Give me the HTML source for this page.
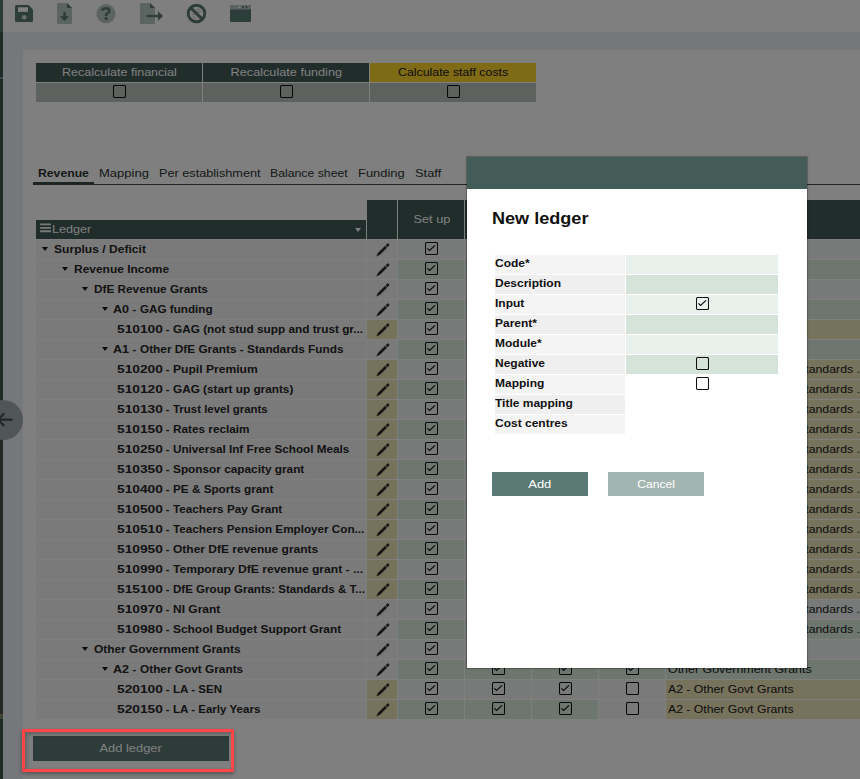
<!DOCTYPE html>
<html><head><meta charset="utf-8">
<style>
*{margin:0;padding:0;box-sizing:border-box}
html,body{width:860px;height:779px;overflow:hidden;background:#fff;font-family:"Liberation Sans",sans-serif;position:relative}
.a{position:absolute}
svg.a{display:block}
#strip{left:0;top:0;width:3px;height:779px;background:#3e524d}
#band{left:3px;top:32px;width:857px;height:747px;background:#eaeef5}
#panel{left:23px;top:50px;width:837px;height:729px;background:#fff}
.rc{top:63px;height:19px;background:#425a56;color:#fff;font-size:11px;line-height:18px;text-align:center}
.rb{top:83px;height:19px;background:#bac4bd}
.ck{display:block}
.tab{top:165px;font-size:11px;line-height:16px;color:#2b3331;white-space:nowrap}
.hd{background:#425a56}
.hdt{font-size:11px;line-height:19px;color:#fff;white-space:nowrap}
.lt{font-size:11px;font-weight:bold;line-height:19px;color:#262626;white-space:nowrap;}
.pt{font-size:11px;line-height:19px;color:#1a1a1a;white-space:nowrap;}
.tri{width:0;height:0;border-left:3.5px solid transparent;border-right:3.5px solid transparent;border-top:4.5px solid #111}
#circ{left:-17px;top:400px;width:40px;height:40px;border-radius:50%;background:#a0abac}
.btn{height:24px;line-height:24px;color:#fff;font-size:11px;text-align:center}
#overlay{left:0;top:0;width:860px;height:779px;background:rgba(0,0,0,0.5)}
.mtitle{font-size:16px;font-weight:bold;line-height:20px;color:#111;}
.ml{height:19px;font-size:11px;font-weight:bold;line-height:16px;color:#111;white-space:nowrap;}

</style></head><body>
<div class="a" id="strip"></div><div class="a" style="left:0;top:0;width:3px;height:32px;background:#5b766f"></div><div class="a" style="left:0;top:77px;width:3px;height:2px;background:#72908a"></div><div class="a" style="left:0;top:440px;width:3px;height:274px;background:#4a5149"></div><div class="a" style="left:0;top:714px;width:3px;height:3px;background:#8c8468"></div><div class="a" style="left:0;top:717px;width:3px;height:2px;background:#6e8c70"></div>
<div class="a" id="band"></div>
<div class="a" id="panel"></div>
<svg class="a" style="left:15px;top:5px" width="18" height="17" viewBox="0 0 18 17"><path d="M1.5 0 H13.5 L18 4.5 V15.5 Q18 17 16.5 17 H1.5 Q0 17 0 15.5 V1.5 Q0 0 1.5 0 Z" fill="#5b7a74"/><rect x="3" y="2.3" width="10" height="4.6" fill="#fff"/><circle cx="9.2" cy="12.3" r="2.4" fill="#fff" opacity="0.7"/></svg>
<svg class="a" style="left:57px;top:3px" width="15" height="21" viewBox="0 0 15 21"><path d="M1 0 H10 L15 5 V20 Q15 21 14 21 H1 Q0 21 0 20 V1 Q0 0 1 0 Z" fill="#b9c9c5"/><path d="M10 0 L15 5 H10 Z" fill="#5b7a74"/><rect x="6.3" y="9" width="2.4" height="5" fill="#5b7a74"/><path d="M2.8 13.3 H12.2 L7.5 18 Z" fill="#5b7a74"/></svg>
<svg class="a" style="left:96px;top:4px" width="20" height="20" viewBox="0 0 20 20"><circle cx="10" cy="9.7" r="9.6" fill="#b9c9c5"/><path d="M6.3 6.6 Q6.5 4.2 10 4.2 Q13.4 4.2 13.4 6.6 Q13.4 8.3 11.6 9.2 Q10 10 10 11.9" fill="none" stroke="#5b7a74" stroke-width="2.6"/><rect x="8.7" y="13.1" width="2.7" height="2.8" rx="0.4" fill="#5b7a74"/></svg>
<svg class="a" style="left:140px;top:3px" width="24" height="21" viewBox="0 0 24 21"><path d="M1 0 H10 L15 5 V20 Q15 21 14 21 H1 Q0 21 0 20 V1 Q0 0 1 0 Z" fill="#b9c9c5"/><path d="M10 0 L15 5 H10 Z" fill="#5b7a74"/><rect x="7" y="11.8" width="12" height="2.4" fill="#5b7a74"/><path d="M18 8.2 L23 13 L18 17.8 Z" fill="#5b7a74"/></svg>
<svg class="a" style="left:186px;top:3px" width="21" height="21" viewBox="0 0 21 21"><path d="M10.5 7 L14.5 6 M11 9.2 L15 8.4 M6.2 11.8 L9.8 11.2 M6.8 13.6 L10 15.2" stroke="#5b7a74" stroke-width="1" opacity="0.4"/><circle cx="10.5" cy="10.5" r="8.3" fill="none" stroke="#5b7a74" stroke-width="2.9"/><path d="M4.6 4.6 L16.4 16.4" stroke="#5b7a74" stroke-width="2.9"/></svg>
<svg class="a" style="left:230px;top:5px" width="21" height="17" viewBox="0 0 21 17"><rect x="0" y="0" width="21" height="17" rx="1.2" fill="#5b7a74"/><rect x="0" y="0" width="21" height="4.5" rx="1" fill="#b9c9c5"/><circle cx="9.5" cy="2.3" r="1.1" fill="#fff"/><circle cx="13" cy="2.3" r="1.1" fill="#5b7a74"/><circle cx="16.5" cy="2.3" r="1.1" fill="#5b7a74"/></svg>
<div class="a rc" style="left:36px;width:166px;"><span style="display:inline-block;transform:scaleX(1.138);transform-origin:center">Recalculate financial</span></div>
<div class="a rc" style="left:203px;width:166px;"><span style="display:inline-block;transform:scaleX(1.154);transform-origin:center">Recalculate funding</span></div>
<div class="a rc" style="left:370px;width:166px;background:#ffd42a;color:#1b1b1b"><span style="display:inline-block;transform:scaleX(1.12);transform-origin:center">Calculate staff costs</span></div>
<div class="a rb" style="left:36px;width:166px"></div>
<div class="a rb" style="left:203px;width:166px"></div>
<div class="a rb" style="left:370px;width:166px"></div>
<div class="a" style="left:113px;top:85px;width:13px;height:13px"><svg class="ck" width="13" height="13" viewBox="0 0 13 13"><rect x="0.5" y="0.5" width="12" height="12" rx="1.2" fill="none" stroke="#111" stroke-width="1.05"/></svg></div><div class="a" style="left:280px;top:85px;width:13px;height:13px"><svg class="ck" width="13" height="13" viewBox="0 0 13 13"><rect x="0.5" y="0.5" width="12" height="12" rx="1.2" fill="none" stroke="#111" stroke-width="1.05"/></svg></div><div class="a" style="left:447px;top:85px;width:13px;height:13px"><svg class="ck" width="13" height="13" viewBox="0 0 13 13"><rect x="0.5" y="0.5" width="12" height="12" rx="1.2" fill="none" stroke="#111" stroke-width="1.05"/></svg></div>
<div class="a tab" style="left:38px;font-weight:bold;"><span style="display:inline-block;transform:scaleX(1.11);transform-origin:left">Revenue</span></div>
<div class="a tab" style="left:99px;"><span style="display:inline-block;transform:scaleX(1.185);transform-origin:left">Mapping</span></div>
<div class="a tab" style="left:159px;"><span style="display:inline-block;transform:scaleX(1.153);transform-origin:left">Per establishment</span></div>
<div class="a tab" style="left:270px;"><span style="display:inline-block;transform:scaleX(1.115);transform-origin:left">Balance sheet</span></div>
<div class="a tab" style="left:358px;"><span style="display:inline-block;transform:scaleX(1.176);transform-origin:left">Funding</span></div>
<div class="a tab" style="left:415px;"><span style="display:inline-block;transform:scaleX(1.17);transform-origin:left">Staff</span></div>
<div class="a" style="left:33px;top:184px;width:827px;height:1px;background:#3a4a46"></div>
<div class="a" style="left:33px;top:182px;width:61px;height:3px;background:#3a4a46"></div>
<div class="a hd" style="left:36px;top:220px;width:330px;height:19px"></div>
<svg class="a" style="left:40px;top:220px" width="11" height="16" viewBox="0 0 11 16"><g fill="#f0f3f2"><rect x="0" y="3.4" width="11" height="1.9" rx="0.5"/><rect x="0" y="6.9" width="11" height="1.9" rx="0.5"/><rect x="0" y="10.3" width="11" height="1.9" rx="0.5"/></g></svg>
<div class="a hdt" style="left:52px;top:220px"><span style="display:inline-block;transform:scaleX(1.146);transform-origin:left">Ledger</span></div>
<div class="a" style="left:355px;top:228px;width:0;height:0;border-left:3.6px solid transparent;border-right:3.6px solid transparent;border-top:4px solid #fff"></div>
<div class="a hd" style="left:367px;top:200px;width:30px;height:39px"></div>
<div class="a hd" style="left:398px;top:200px;width:66px;height:39px"></div>
<div class="a hd" style="left:465px;top:200px;width:66px;height:39px"></div>
<div class="a hd" style="left:532px;top:200px;width:66px;height:39px"></div>
<div class="a hd" style="left:599px;top:200px;width:66px;height:39px"></div>
<div class="a hd" style="left:666px;top:200px;width:194px;height:39px"></div>
<div class="a hdt" style="left:398px;top:210px;width:66px;text-align:center;padding-left:1px"><span style="display:inline-block;transform:scaleX(1.157);transform-origin:center">Set up</span></div>
<div class="a" style="left:36px;top:240px;width:330px;height:19px;background:#f4f4f4"></div>
<div class="a tri" style="left:41.5px;top:247px"></div>
<div class="a lt" style="left:54px;top:240px"><span style="display:inline-block;transform:scaleX(1.098);transform-origin:left">Surplus / Deficit</span></div>
<div class="a" style="left:367px;top:240px;width:30px;height:19px;background:#f4f4f4"></div>
<div class="a" style="left:375px;top:242px;width:16px;height:16px"><svg width="16" height="16" viewBox="0 0 16 16"><g transform="translate(1.2 14.6) rotate(-45)" fill="#2e2e2e"><path d="M0 0 L4 -1.35 H14 V1.35 H4 Z"/><path d="M14.7 -1.35 H16.9 Q17.9 -1.35 17.9 -0.35 V0.35 Q17.9 1.35 16.9 1.35 H14.7 Z"/></g></svg></div>
<div class="a" style="left:398px;top:240px;width:66px;height:19px;background:#f1f5f3"></div>
<div class="a" style="left:465px;top:240px;width:66px;height:19px;background:#f1f5f3"></div>
<div class="a" style="left:532px;top:240px;width:66px;height:19px;background:#f1f5f3"></div>
<div class="a" style="left:599px;top:240px;width:66px;height:19px;background:#f1f5f3"></div>
<div class="a" style="left:666px;top:240px;width:194px;height:19px;background:#f1f5f3"></div>
<div class="a" style="left:425px;top:242px;width:13px;height:13px"><svg class="ck" width="13" height="13" viewBox="0 0 13 13"><rect x="0.5" y="0.5" width="12" height="12" rx="1.2" fill="none" stroke="#111" stroke-width="1.05"/><path d="M2.4 6.4 L4.6 8.5 L10 3.4" fill="none" stroke="#111" stroke-width="1.2"/></svg></div>
<div class="a" style="left:492px;top:242px;width:13px;height:13px"><svg class="ck" width="13" height="13" viewBox="0 0 13 13"><rect x="0.5" y="0.5" width="12" height="12" rx="1.2" fill="none" stroke="#111" stroke-width="1.05"/><path d="M2.4 6.4 L4.6 8.5 L10 3.4" fill="none" stroke="#111" stroke-width="1.2"/></svg></div>
<div class="a" style="left:559px;top:242px;width:13px;height:13px"><svg class="ck" width="13" height="13" viewBox="0 0 13 13"><rect x="0.5" y="0.5" width="12" height="12" rx="1.2" fill="none" stroke="#111" stroke-width="1.05"/><path d="M2.4 6.4 L4.6 8.5 L10 3.4" fill="none" stroke="#111" stroke-width="1.2"/></svg></div>
<div class="a" style="left:626px;top:242px;width:13px;height:13px"><svg class="ck" width="13" height="13" viewBox="0 0 13 13"><rect x="0.5" y="0.5" width="12" height="12" rx="1.2" fill="none" stroke="#111" stroke-width="1.05"/><path d="M2.4 6.4 L4.6 8.5 L10 3.4" fill="none" stroke="#111" stroke-width="1.2"/></svg></div>
<div class="a" style="left:36px;top:260px;width:330px;height:19px;background:#f4f4f4"></div>
<div class="a tri" style="left:61.5px;top:267px"></div>
<div class="a lt" style="left:74px;top:260px"><span style="display:inline-block;transform:scaleX(1.087);transform-origin:left">Revenue Income</span></div>
<div class="a" style="left:367px;top:260px;width:30px;height:19px;background:#f4f4f4"></div>
<div class="a" style="left:375px;top:262px;width:16px;height:16px"><svg width="16" height="16" viewBox="0 0 16 16"><g transform="translate(1.2 14.6) rotate(-45)" fill="#2e2e2e"><path d="M0 0 L4 -1.35 H14 V1.35 H4 Z"/><path d="M14.7 -1.35 H16.9 Q17.9 -1.35 17.9 -0.35 V0.35 Q17.9 1.35 16.9 1.35 H14.7 Z"/></g></svg></div>
<div class="a" style="left:398px;top:260px;width:66px;height:19px;background:#dbeedf"></div>
<div class="a" style="left:465px;top:260px;width:66px;height:19px;background:#dbeedf"></div>
<div class="a" style="left:532px;top:260px;width:66px;height:19px;background:#dbeedf"></div>
<div class="a" style="left:599px;top:260px;width:66px;height:19px;background:#dbeedf"></div>
<div class="a" style="left:666px;top:260px;width:194px;height:19px;background:#dbeedf"></div>
<div class="a" style="left:425px;top:262px;width:13px;height:13px"><svg class="ck" width="13" height="13" viewBox="0 0 13 13"><rect x="0.5" y="0.5" width="12" height="12" rx="1.2" fill="none" stroke="#111" stroke-width="1.05"/><path d="M2.4 6.4 L4.6 8.5 L10 3.4" fill="none" stroke="#111" stroke-width="1.2"/></svg></div>
<div class="a" style="left:492px;top:262px;width:13px;height:13px"><svg class="ck" width="13" height="13" viewBox="0 0 13 13"><rect x="0.5" y="0.5" width="12" height="12" rx="1.2" fill="none" stroke="#111" stroke-width="1.05"/><path d="M2.4 6.4 L4.6 8.5 L10 3.4" fill="none" stroke="#111" stroke-width="1.2"/></svg></div>
<div class="a" style="left:559px;top:262px;width:13px;height:13px"><svg class="ck" width="13" height="13" viewBox="0 0 13 13"><rect x="0.5" y="0.5" width="12" height="12" rx="1.2" fill="none" stroke="#111" stroke-width="1.05"/><path d="M2.4 6.4 L4.6 8.5 L10 3.4" fill="none" stroke="#111" stroke-width="1.2"/></svg></div>
<div class="a" style="left:626px;top:262px;width:13px;height:13px"><svg class="ck" width="13" height="13" viewBox="0 0 13 13"><rect x="0.5" y="0.5" width="12" height="12" rx="1.2" fill="none" stroke="#111" stroke-width="1.05"/><path d="M2.4 6.4 L4.6 8.5 L10 3.4" fill="none" stroke="#111" stroke-width="1.2"/></svg></div>
<div class="a" style="left:36px;top:280px;width:330px;height:19px;background:#f4f4f4"></div>
<div class="a tri" style="left:81.5px;top:287px"></div>
<div class="a lt" style="left:94px;top:280px"><span style="display:inline-block;transform:scaleX(1.071);transform-origin:left">DfE Revenue Grants</span></div>
<div class="a" style="left:367px;top:280px;width:30px;height:19px;background:#f4f4f4"></div>
<div class="a" style="left:375px;top:282px;width:16px;height:16px"><svg width="16" height="16" viewBox="0 0 16 16"><g transform="translate(1.2 14.6) rotate(-45)" fill="#2e2e2e"><path d="M0 0 L4 -1.35 H14 V1.35 H4 Z"/><path d="M14.7 -1.35 H16.9 Q17.9 -1.35 17.9 -0.35 V0.35 Q17.9 1.35 16.9 1.35 H14.7 Z"/></g></svg></div>
<div class="a" style="left:398px;top:280px;width:66px;height:19px;background:#f1f5f3"></div>
<div class="a" style="left:465px;top:280px;width:66px;height:19px;background:#f1f5f3"></div>
<div class="a" style="left:532px;top:280px;width:66px;height:19px;background:#f1f5f3"></div>
<div class="a" style="left:599px;top:280px;width:66px;height:19px;background:#f1f5f3"></div>
<div class="a" style="left:666px;top:280px;width:194px;height:19px;background:#f1f5f3"></div>
<div class="a" style="left:425px;top:282px;width:13px;height:13px"><svg class="ck" width="13" height="13" viewBox="0 0 13 13"><rect x="0.5" y="0.5" width="12" height="12" rx="1.2" fill="none" stroke="#111" stroke-width="1.05"/><path d="M2.4 6.4 L4.6 8.5 L10 3.4" fill="none" stroke="#111" stroke-width="1.2"/></svg></div>
<div class="a" style="left:492px;top:282px;width:13px;height:13px"><svg class="ck" width="13" height="13" viewBox="0 0 13 13"><rect x="0.5" y="0.5" width="12" height="12" rx="1.2" fill="none" stroke="#111" stroke-width="1.05"/><path d="M2.4 6.4 L4.6 8.5 L10 3.4" fill="none" stroke="#111" stroke-width="1.2"/></svg></div>
<div class="a" style="left:559px;top:282px;width:13px;height:13px"><svg class="ck" width="13" height="13" viewBox="0 0 13 13"><rect x="0.5" y="0.5" width="12" height="12" rx="1.2" fill="none" stroke="#111" stroke-width="1.05"/><path d="M2.4 6.4 L4.6 8.5 L10 3.4" fill="none" stroke="#111" stroke-width="1.2"/></svg></div>
<div class="a" style="left:626px;top:282px;width:13px;height:13px"><svg class="ck" width="13" height="13" viewBox="0 0 13 13"><rect x="0.5" y="0.5" width="12" height="12" rx="1.2" fill="none" stroke="#111" stroke-width="1.05"/><path d="M2.4 6.4 L4.6 8.5 L10 3.4" fill="none" stroke="#111" stroke-width="1.2"/></svg></div>
<div class="a" style="left:36px;top:300px;width:330px;height:19px;background:#f4f4f4"></div>
<div class="a tri" style="left:101.5px;top:307px"></div>
<div class="a lt" style="left:113.4px;top:300px"><span style="display:inline-block;transform:scaleX(1.14);transform-origin:left">A0</span></div>
<div class="a lt" style="left:132.6px;top:300px">-</div>
<div class="a lt" style="left:140.2px;top:300px"><span style="display:inline-block;transform:scaleX(1.061);transform-origin:left">GAG funding</span></div>
<div class="a" style="left:367px;top:300px;width:30px;height:19px;background:#f4f4f4"></div>
<div class="a" style="left:375px;top:302px;width:16px;height:16px"><svg width="16" height="16" viewBox="0 0 16 16"><g transform="translate(1.2 14.6) rotate(-45)" fill="#2e2e2e"><path d="M0 0 L4 -1.35 H14 V1.35 H4 Z"/><path d="M14.7 -1.35 H16.9 Q17.9 -1.35 17.9 -0.35 V0.35 Q17.9 1.35 16.9 1.35 H14.7 Z"/></g></svg></div>
<div class="a" style="left:398px;top:300px;width:66px;height:19px;background:#dbeedf"></div>
<div class="a" style="left:465px;top:300px;width:66px;height:19px;background:#dbeedf"></div>
<div class="a" style="left:532px;top:300px;width:66px;height:19px;background:#dbeedf"></div>
<div class="a" style="left:599px;top:300px;width:66px;height:19px;background:#dbeedf"></div>
<div class="a" style="left:666px;top:300px;width:194px;height:19px;background:#dbeedf"></div>
<div class="a" style="left:425px;top:302px;width:13px;height:13px"><svg class="ck" width="13" height="13" viewBox="0 0 13 13"><rect x="0.5" y="0.5" width="12" height="12" rx="1.2" fill="none" stroke="#111" stroke-width="1.05"/><path d="M2.4 6.4 L4.6 8.5 L10 3.4" fill="none" stroke="#111" stroke-width="1.2"/></svg></div>
<div class="a" style="left:492px;top:302px;width:13px;height:13px"><svg class="ck" width="13" height="13" viewBox="0 0 13 13"><rect x="0.5" y="0.5" width="12" height="12" rx="1.2" fill="none" stroke="#111" stroke-width="1.05"/><path d="M2.4 6.4 L4.6 8.5 L10 3.4" fill="none" stroke="#111" stroke-width="1.2"/></svg></div>
<div class="a" style="left:559px;top:302px;width:13px;height:13px"><svg class="ck" width="13" height="13" viewBox="0 0 13 13"><rect x="0.5" y="0.5" width="12" height="12" rx="1.2" fill="none" stroke="#111" stroke-width="1.05"/><path d="M2.4 6.4 L4.6 8.5 L10 3.4" fill="none" stroke="#111" stroke-width="1.2"/></svg></div>
<div class="a" style="left:626px;top:302px;width:13px;height:13px"><svg class="ck" width="13" height="13" viewBox="0 0 13 13"><rect x="0.5" y="0.5" width="12" height="12" rx="1.2" fill="none" stroke="#111" stroke-width="1.05"/><path d="M2.4 6.4 L4.6 8.5 L10 3.4" fill="none" stroke="#111" stroke-width="1.2"/></svg></div>
<div class="a" style="left:36px;top:320px;width:330px;height:19px;background:#f4f4f4"></div>
<div class="a lt" style="left:116.6px;top:320px"><span style="display:inline-block;transform:scaleX(1.25);transform-origin:left">510100</span></div>
<div class="a lt" style="left:165.8px;top:320px">-</div>
<div class="a lt" style="left:173.3px;top:320px"><span style="display:inline-block;transform:scaleX(1.073);transform-origin:left">GAG (not stud supp and trust gr...</span></div>
<div class="a" style="left:367px;top:320px;width:30px;height:19px;background:#eee4b9"></div>
<div class="a" style="left:375px;top:322px;width:16px;height:16px"><svg width="16" height="16" viewBox="0 0 16 16"><g transform="translate(1.2 14.6) rotate(-45)" fill="#2e2e2e"><path d="M0 0 L4 -1.35 H14 V1.35 H4 Z"/><path d="M14.7 -1.35 H16.9 Q17.9 -1.35 17.9 -0.35 V0.35 Q17.9 1.35 16.9 1.35 H14.7 Z"/></g></svg></div>
<div class="a" style="left:398px;top:320px;width:66px;height:19px;background:#f1f5f3"></div>
<div class="a" style="left:465px;top:320px;width:66px;height:19px;background:#f1f5f3"></div>
<div class="a" style="left:532px;top:320px;width:66px;height:19px;background:#f1f5f3"></div>
<div class="a" style="left:599px;top:320px;width:66px;height:19px;background:#f1f5f3"></div>
<div class="a" style="left:666px;top:320px;width:194px;height:19px;background:#eee4b9"></div>
<div class="a" style="left:425px;top:322px;width:13px;height:13px"><svg class="ck" width="13" height="13" viewBox="0 0 13 13"><rect x="0.5" y="0.5" width="12" height="12" rx="1.2" fill="none" stroke="#111" stroke-width="1.05"/><path d="M2.4 6.4 L4.6 8.5 L10 3.4" fill="none" stroke="#111" stroke-width="1.2"/></svg></div>
<div class="a" style="left:492px;top:322px;width:13px;height:13px"><svg class="ck" width="13" height="13" viewBox="0 0 13 13"><rect x="0.5" y="0.5" width="12" height="12" rx="1.2" fill="none" stroke="#111" stroke-width="1.05"/><path d="M2.4 6.4 L4.6 8.5 L10 3.4" fill="none" stroke="#111" stroke-width="1.2"/></svg></div>
<div class="a" style="left:559px;top:322px;width:13px;height:13px"><svg class="ck" width="13" height="13" viewBox="0 0 13 13"><rect x="0.5" y="0.5" width="12" height="12" rx="1.2" fill="none" stroke="#111" stroke-width="1.05"/><path d="M2.4 6.4 L4.6 8.5 L10 3.4" fill="none" stroke="#111" stroke-width="1.2"/></svg></div>
<div class="a" style="left:626px;top:322px;width:13px;height:13px"><svg class="ck" width="13" height="13" viewBox="0 0 13 13"><rect x="0.5" y="0.5" width="12" height="12" rx="1.2" fill="none" stroke="#111" stroke-width="1.05"/><path d="M2.4 6.4 L4.6 8.5 L10 3.4" fill="none" stroke="#111" stroke-width="1.2"/></svg></div>
<div class="a" style="left:36px;top:340px;width:330px;height:19px;background:#f4f4f4"></div>
<div class="a tri" style="left:101.5px;top:347px"></div>
<div class="a lt" style="left:113.4px;top:340px"><span style="display:inline-block;transform:scaleX(1.14);transform-origin:left">A1</span></div>
<div class="a lt" style="left:132.6px;top:340px">-</div>
<div class="a lt" style="left:140.2px;top:340px"><span style="display:inline-block;transform:scaleX(1.074);transform-origin:left">Other DfE Grants - Standards Funds</span></div>
<div class="a" style="left:367px;top:340px;width:30px;height:19px;background:#f4f4f4"></div>
<div class="a" style="left:375px;top:342px;width:16px;height:16px"><svg width="16" height="16" viewBox="0 0 16 16"><g transform="translate(1.2 14.6) rotate(-45)" fill="#2e2e2e"><path d="M0 0 L4 -1.35 H14 V1.35 H4 Z"/><path d="M14.7 -1.35 H16.9 Q17.9 -1.35 17.9 -0.35 V0.35 Q17.9 1.35 16.9 1.35 H14.7 Z"/></g></svg></div>
<div class="a" style="left:398px;top:340px;width:66px;height:19px;background:#dbeedf"></div>
<div class="a" style="left:465px;top:340px;width:66px;height:19px;background:#dbeedf"></div>
<div class="a" style="left:532px;top:340px;width:66px;height:19px;background:#dbeedf"></div>
<div class="a" style="left:599px;top:340px;width:66px;height:19px;background:#dbeedf"></div>
<div class="a" style="left:666px;top:340px;width:194px;height:19px;background:#dbeedf"></div>
<div class="a" style="left:425px;top:342px;width:13px;height:13px"><svg class="ck" width="13" height="13" viewBox="0 0 13 13"><rect x="0.5" y="0.5" width="12" height="12" rx="1.2" fill="none" stroke="#111" stroke-width="1.05"/><path d="M2.4 6.4 L4.6 8.5 L10 3.4" fill="none" stroke="#111" stroke-width="1.2"/></svg></div>
<div class="a" style="left:492px;top:342px;width:13px;height:13px"><svg class="ck" width="13" height="13" viewBox="0 0 13 13"><rect x="0.5" y="0.5" width="12" height="12" rx="1.2" fill="none" stroke="#111" stroke-width="1.05"/><path d="M2.4 6.4 L4.6 8.5 L10 3.4" fill="none" stroke="#111" stroke-width="1.2"/></svg></div>
<div class="a" style="left:559px;top:342px;width:13px;height:13px"><svg class="ck" width="13" height="13" viewBox="0 0 13 13"><rect x="0.5" y="0.5" width="12" height="12" rx="1.2" fill="none" stroke="#111" stroke-width="1.05"/><path d="M2.4 6.4 L4.6 8.5 L10 3.4" fill="none" stroke="#111" stroke-width="1.2"/></svg></div>
<div class="a" style="left:626px;top:342px;width:13px;height:13px"><svg class="ck" width="13" height="13" viewBox="0 0 13 13"><rect x="0.5" y="0.5" width="12" height="12" rx="1.2" fill="none" stroke="#111" stroke-width="1.05"/><path d="M2.4 6.4 L4.6 8.5 L10 3.4" fill="none" stroke="#111" stroke-width="1.2"/></svg></div>
<div class="a" style="left:36px;top:360px;width:330px;height:19px;background:#f4f4f4"></div>
<div class="a lt" style="left:116.6px;top:360px"><span style="display:inline-block;transform:scaleX(1.25);transform-origin:left">510200</span></div>
<div class="a lt" style="left:165.8px;top:360px">-</div>
<div class="a lt" style="left:173.3px;top:360px"><span style="display:inline-block;transform:scaleX(1.1);transform-origin:left">Pupil Premium</span></div>
<div class="a" style="left:367px;top:360px;width:30px;height:19px;background:#eee4b9"></div>
<div class="a" style="left:375px;top:362px;width:16px;height:16px"><svg width="16" height="16" viewBox="0 0 16 16"><g transform="translate(1.2 14.6) rotate(-45)" fill="#2e2e2e"><path d="M0 0 L4 -1.35 H14 V1.35 H4 Z"/><path d="M14.7 -1.35 H16.9 Q17.9 -1.35 17.9 -0.35 V0.35 Q17.9 1.35 16.9 1.35 H14.7 Z"/></g></svg></div>
<div class="a" style="left:398px;top:360px;width:66px;height:19px;background:#f1f5f3"></div>
<div class="a" style="left:465px;top:360px;width:66px;height:19px;background:#f1f5f3"></div>
<div class="a" style="left:532px;top:360px;width:66px;height:19px;background:#f1f5f3"></div>
<div class="a" style="left:599px;top:360px;width:66px;height:19px;background:#f1f5f3"></div>
<div class="a" style="left:666px;top:360px;width:194px;height:19px;background:#eee4b9"></div>
<div class="a" style="left:425px;top:362px;width:13px;height:13px"><svg class="ck" width="13" height="13" viewBox="0 0 13 13"><rect x="0.5" y="0.5" width="12" height="12" rx="1.2" fill="none" stroke="#111" stroke-width="1.05"/><path d="M2.4 6.4 L4.6 8.5 L10 3.4" fill="none" stroke="#111" stroke-width="1.2"/></svg></div>
<div class="a" style="left:492px;top:362px;width:13px;height:13px"><svg class="ck" width="13" height="13" viewBox="0 0 13 13"><rect x="0.5" y="0.5" width="12" height="12" rx="1.2" fill="none" stroke="#111" stroke-width="1.05"/><path d="M2.4 6.4 L4.6 8.5 L10 3.4" fill="none" stroke="#111" stroke-width="1.2"/></svg></div>
<div class="a" style="left:559px;top:362px;width:13px;height:13px"><svg class="ck" width="13" height="13" viewBox="0 0 13 13"><rect x="0.5" y="0.5" width="12" height="12" rx="1.2" fill="none" stroke="#111" stroke-width="1.05"/><path d="M2.4 6.4 L4.6 8.5 L10 3.4" fill="none" stroke="#111" stroke-width="1.2"/></svg></div>
<div class="a" style="left:626px;top:362px;width:13px;height:13px"><svg class="ck" width="13" height="13" viewBox="0 0 13 13"><rect x="0.5" y="0.5" width="12" height="12" rx="1.2" fill="none" stroke="#111" stroke-width="1.05"/><path d="M2.4 6.4 L4.6 8.5 L10 3.4" fill="none" stroke="#111" stroke-width="1.2"/></svg></div>
<div class="a pt" style="left:797px;top:360px"><span style="display:inline-block;transform:scaleX(1.12);transform-origin:left">Standards ...</span></div>
<div class="a" style="left:36px;top:380px;width:330px;height:19px;background:#f4f4f4"></div>
<div class="a lt" style="left:116.6px;top:380px"><span style="display:inline-block;transform:scaleX(1.25);transform-origin:left">510120</span></div>
<div class="a lt" style="left:165.8px;top:380px">-</div>
<div class="a lt" style="left:173.3px;top:380px"><span style="display:inline-block;transform:scaleX(1.07);transform-origin:left">GAG (start up grants)</span></div>
<div class="a" style="left:367px;top:380px;width:30px;height:19px;background:#eee4b9"></div>
<div class="a" style="left:375px;top:382px;width:16px;height:16px"><svg width="16" height="16" viewBox="0 0 16 16"><g transform="translate(1.2 14.6) rotate(-45)" fill="#2e2e2e"><path d="M0 0 L4 -1.35 H14 V1.35 H4 Z"/><path d="M14.7 -1.35 H16.9 Q17.9 -1.35 17.9 -0.35 V0.35 Q17.9 1.35 16.9 1.35 H14.7 Z"/></g></svg></div>
<div class="a" style="left:398px;top:380px;width:66px;height:19px;background:#dbeedf"></div>
<div class="a" style="left:465px;top:380px;width:66px;height:19px;background:#dbeedf"></div>
<div class="a" style="left:532px;top:380px;width:66px;height:19px;background:#dbeedf"></div>
<div class="a" style="left:599px;top:380px;width:66px;height:19px;background:#dbeedf"></div>
<div class="a" style="left:666px;top:380px;width:194px;height:19px;background:#eee4b9"></div>
<div class="a" style="left:425px;top:382px;width:13px;height:13px"><svg class="ck" width="13" height="13" viewBox="0 0 13 13"><rect x="0.5" y="0.5" width="12" height="12" rx="1.2" fill="none" stroke="#111" stroke-width="1.05"/><path d="M2.4 6.4 L4.6 8.5 L10 3.4" fill="none" stroke="#111" stroke-width="1.2"/></svg></div>
<div class="a" style="left:492px;top:382px;width:13px;height:13px"><svg class="ck" width="13" height="13" viewBox="0 0 13 13"><rect x="0.5" y="0.5" width="12" height="12" rx="1.2" fill="none" stroke="#111" stroke-width="1.05"/><path d="M2.4 6.4 L4.6 8.5 L10 3.4" fill="none" stroke="#111" stroke-width="1.2"/></svg></div>
<div class="a" style="left:559px;top:382px;width:13px;height:13px"><svg class="ck" width="13" height="13" viewBox="0 0 13 13"><rect x="0.5" y="0.5" width="12" height="12" rx="1.2" fill="none" stroke="#111" stroke-width="1.05"/><path d="M2.4 6.4 L4.6 8.5 L10 3.4" fill="none" stroke="#111" stroke-width="1.2"/></svg></div>
<div class="a" style="left:626px;top:382px;width:13px;height:13px"><svg class="ck" width="13" height="13" viewBox="0 0 13 13"><rect x="0.5" y="0.5" width="12" height="12" rx="1.2" fill="none" stroke="#111" stroke-width="1.05"/><path d="M2.4 6.4 L4.6 8.5 L10 3.4" fill="none" stroke="#111" stroke-width="1.2"/></svg></div>
<div class="a pt" style="left:797px;top:380px"><span style="display:inline-block;transform:scaleX(1.12);transform-origin:left">Standards ...</span></div>
<div class="a" style="left:36px;top:400px;width:330px;height:19px;background:#f4f4f4"></div>
<div class="a lt" style="left:116.6px;top:400px"><span style="display:inline-block;transform:scaleX(1.25);transform-origin:left">510130</span></div>
<div class="a lt" style="left:165.8px;top:400px">-</div>
<div class="a lt" style="left:173.3px;top:400px"><span style="display:inline-block;transform:scaleX(1.04);transform-origin:left">Trust level grants</span></div>
<div class="a" style="left:367px;top:400px;width:30px;height:19px;background:#eee4b9"></div>
<div class="a" style="left:375px;top:402px;width:16px;height:16px"><svg width="16" height="16" viewBox="0 0 16 16"><g transform="translate(1.2 14.6) rotate(-45)" fill="#2e2e2e"><path d="M0 0 L4 -1.35 H14 V1.35 H4 Z"/><path d="M14.7 -1.35 H16.9 Q17.9 -1.35 17.9 -0.35 V0.35 Q17.9 1.35 16.9 1.35 H14.7 Z"/></g></svg></div>
<div class="a" style="left:398px;top:400px;width:66px;height:19px;background:#f1f5f3"></div>
<div class="a" style="left:465px;top:400px;width:66px;height:19px;background:#f1f5f3"></div>
<div class="a" style="left:532px;top:400px;width:66px;height:19px;background:#f1f5f3"></div>
<div class="a" style="left:599px;top:400px;width:66px;height:19px;background:#f1f5f3"></div>
<div class="a" style="left:666px;top:400px;width:194px;height:19px;background:#eee4b9"></div>
<div class="a" style="left:425px;top:402px;width:13px;height:13px"><svg class="ck" width="13" height="13" viewBox="0 0 13 13"><rect x="0.5" y="0.5" width="12" height="12" rx="1.2" fill="none" stroke="#111" stroke-width="1.05"/><path d="M2.4 6.4 L4.6 8.5 L10 3.4" fill="none" stroke="#111" stroke-width="1.2"/></svg></div>
<div class="a" style="left:492px;top:402px;width:13px;height:13px"><svg class="ck" width="13" height="13" viewBox="0 0 13 13"><rect x="0.5" y="0.5" width="12" height="12" rx="1.2" fill="none" stroke="#111" stroke-width="1.05"/><path d="M2.4 6.4 L4.6 8.5 L10 3.4" fill="none" stroke="#111" stroke-width="1.2"/></svg></div>
<div class="a" style="left:559px;top:402px;width:13px;height:13px"><svg class="ck" width="13" height="13" viewBox="0 0 13 13"><rect x="0.5" y="0.5" width="12" height="12" rx="1.2" fill="none" stroke="#111" stroke-width="1.05"/><path d="M2.4 6.4 L4.6 8.5 L10 3.4" fill="none" stroke="#111" stroke-width="1.2"/></svg></div>
<div class="a" style="left:626px;top:402px;width:13px;height:13px"><svg class="ck" width="13" height="13" viewBox="0 0 13 13"><rect x="0.5" y="0.5" width="12" height="12" rx="1.2" fill="none" stroke="#111" stroke-width="1.05"/><path d="M2.4 6.4 L4.6 8.5 L10 3.4" fill="none" stroke="#111" stroke-width="1.2"/></svg></div>
<div class="a pt" style="left:797px;top:400px"><span style="display:inline-block;transform:scaleX(1.12);transform-origin:left">Standards ...</span></div>
<div class="a" style="left:36px;top:420px;width:330px;height:19px;background:#f4f4f4"></div>
<div class="a lt" style="left:116.6px;top:420px"><span style="display:inline-block;transform:scaleX(1.25);transform-origin:left">510150</span></div>
<div class="a lt" style="left:165.8px;top:420px">-</div>
<div class="a lt" style="left:173.3px;top:420px"><span style="display:inline-block;transform:scaleX(1.07);transform-origin:left">Rates reclaim</span></div>
<div class="a" style="left:367px;top:420px;width:30px;height:19px;background:#eee4b9"></div>
<div class="a" style="left:375px;top:422px;width:16px;height:16px"><svg width="16" height="16" viewBox="0 0 16 16"><g transform="translate(1.2 14.6) rotate(-45)" fill="#2e2e2e"><path d="M0 0 L4 -1.35 H14 V1.35 H4 Z"/><path d="M14.7 -1.35 H16.9 Q17.9 -1.35 17.9 -0.35 V0.35 Q17.9 1.35 16.9 1.35 H14.7 Z"/></g></svg></div>
<div class="a" style="left:398px;top:420px;width:66px;height:19px;background:#dbeedf"></div>
<div class="a" style="left:465px;top:420px;width:66px;height:19px;background:#dbeedf"></div>
<div class="a" style="left:532px;top:420px;width:66px;height:19px;background:#dbeedf"></div>
<div class="a" style="left:599px;top:420px;width:66px;height:19px;background:#dbeedf"></div>
<div class="a" style="left:666px;top:420px;width:194px;height:19px;background:#eee4b9"></div>
<div class="a" style="left:425px;top:422px;width:13px;height:13px"><svg class="ck" width="13" height="13" viewBox="0 0 13 13"><rect x="0.5" y="0.5" width="12" height="12" rx="1.2" fill="none" stroke="#111" stroke-width="1.05"/><path d="M2.4 6.4 L4.6 8.5 L10 3.4" fill="none" stroke="#111" stroke-width="1.2"/></svg></div>
<div class="a" style="left:492px;top:422px;width:13px;height:13px"><svg class="ck" width="13" height="13" viewBox="0 0 13 13"><rect x="0.5" y="0.5" width="12" height="12" rx="1.2" fill="none" stroke="#111" stroke-width="1.05"/><path d="M2.4 6.4 L4.6 8.5 L10 3.4" fill="none" stroke="#111" stroke-width="1.2"/></svg></div>
<div class="a" style="left:559px;top:422px;width:13px;height:13px"><svg class="ck" width="13" height="13" viewBox="0 0 13 13"><rect x="0.5" y="0.5" width="12" height="12" rx="1.2" fill="none" stroke="#111" stroke-width="1.05"/><path d="M2.4 6.4 L4.6 8.5 L10 3.4" fill="none" stroke="#111" stroke-width="1.2"/></svg></div>
<div class="a" style="left:626px;top:422px;width:13px;height:13px"><svg class="ck" width="13" height="13" viewBox="0 0 13 13"><rect x="0.5" y="0.5" width="12" height="12" rx="1.2" fill="none" stroke="#111" stroke-width="1.05"/><path d="M2.4 6.4 L4.6 8.5 L10 3.4" fill="none" stroke="#111" stroke-width="1.2"/></svg></div>
<div class="a pt" style="left:797px;top:420px"><span style="display:inline-block;transform:scaleX(1.12);transform-origin:left">Standards ...</span></div>
<div class="a" style="left:36px;top:440px;width:330px;height:19px;background:#f4f4f4"></div>
<div class="a lt" style="left:116.6px;top:440px"><span style="display:inline-block;transform:scaleX(1.25);transform-origin:left">510250</span></div>
<div class="a lt" style="left:165.8px;top:440px">-</div>
<div class="a lt" style="left:173.3px;top:440px"><span style="display:inline-block;transform:scaleX(1.064);transform-origin:left">Universal Inf Free School Meals</span></div>
<div class="a" style="left:367px;top:440px;width:30px;height:19px;background:#eee4b9"></div>
<div class="a" style="left:375px;top:442px;width:16px;height:16px"><svg width="16" height="16" viewBox="0 0 16 16"><g transform="translate(1.2 14.6) rotate(-45)" fill="#2e2e2e"><path d="M0 0 L4 -1.35 H14 V1.35 H4 Z"/><path d="M14.7 -1.35 H16.9 Q17.9 -1.35 17.9 -0.35 V0.35 Q17.9 1.35 16.9 1.35 H14.7 Z"/></g></svg></div>
<div class="a" style="left:398px;top:440px;width:66px;height:19px;background:#f1f5f3"></div>
<div class="a" style="left:465px;top:440px;width:66px;height:19px;background:#f1f5f3"></div>
<div class="a" style="left:532px;top:440px;width:66px;height:19px;background:#f1f5f3"></div>
<div class="a" style="left:599px;top:440px;width:66px;height:19px;background:#f1f5f3"></div>
<div class="a" style="left:666px;top:440px;width:194px;height:19px;background:#eee4b9"></div>
<div class="a" style="left:425px;top:442px;width:13px;height:13px"><svg class="ck" width="13" height="13" viewBox="0 0 13 13"><rect x="0.5" y="0.5" width="12" height="12" rx="1.2" fill="none" stroke="#111" stroke-width="1.05"/><path d="M2.4 6.4 L4.6 8.5 L10 3.4" fill="none" stroke="#111" stroke-width="1.2"/></svg></div>
<div class="a" style="left:492px;top:442px;width:13px;height:13px"><svg class="ck" width="13" height="13" viewBox="0 0 13 13"><rect x="0.5" y="0.5" width="12" height="12" rx="1.2" fill="none" stroke="#111" stroke-width="1.05"/><path d="M2.4 6.4 L4.6 8.5 L10 3.4" fill="none" stroke="#111" stroke-width="1.2"/></svg></div>
<div class="a" style="left:559px;top:442px;width:13px;height:13px"><svg class="ck" width="13" height="13" viewBox="0 0 13 13"><rect x="0.5" y="0.5" width="12" height="12" rx="1.2" fill="none" stroke="#111" stroke-width="1.05"/><path d="M2.4 6.4 L4.6 8.5 L10 3.4" fill="none" stroke="#111" stroke-width="1.2"/></svg></div>
<div class="a" style="left:626px;top:442px;width:13px;height:13px"><svg class="ck" width="13" height="13" viewBox="0 0 13 13"><rect x="0.5" y="0.5" width="12" height="12" rx="1.2" fill="none" stroke="#111" stroke-width="1.05"/><path d="M2.4 6.4 L4.6 8.5 L10 3.4" fill="none" stroke="#111" stroke-width="1.2"/></svg></div>
<div class="a pt" style="left:797px;top:440px"><span style="display:inline-block;transform:scaleX(1.12);transform-origin:left">Standards ...</span></div>
<div class="a" style="left:36px;top:460px;width:330px;height:19px;background:#f4f4f4"></div>
<div class="a lt" style="left:116.6px;top:460px"><span style="display:inline-block;transform:scaleX(1.25);transform-origin:left">510350</span></div>
<div class="a lt" style="left:165.8px;top:460px">-</div>
<div class="a lt" style="left:173.3px;top:460px"><span style="display:inline-block;transform:scaleX(1.074);transform-origin:left">Sponsor capacity grant</span></div>
<div class="a" style="left:367px;top:460px;width:30px;height:19px;background:#eee4b9"></div>
<div class="a" style="left:375px;top:462px;width:16px;height:16px"><svg width="16" height="16" viewBox="0 0 16 16"><g transform="translate(1.2 14.6) rotate(-45)" fill="#2e2e2e"><path d="M0 0 L4 -1.35 H14 V1.35 H4 Z"/><path d="M14.7 -1.35 H16.9 Q17.9 -1.35 17.9 -0.35 V0.35 Q17.9 1.35 16.9 1.35 H14.7 Z"/></g></svg></div>
<div class="a" style="left:398px;top:460px;width:66px;height:19px;background:#dbeedf"></div>
<div class="a" style="left:465px;top:460px;width:66px;height:19px;background:#dbeedf"></div>
<div class="a" style="left:532px;top:460px;width:66px;height:19px;background:#dbeedf"></div>
<div class="a" style="left:599px;top:460px;width:66px;height:19px;background:#dbeedf"></div>
<div class="a" style="left:666px;top:460px;width:194px;height:19px;background:#eee4b9"></div>
<div class="a" style="left:425px;top:462px;width:13px;height:13px"><svg class="ck" width="13" height="13" viewBox="0 0 13 13"><rect x="0.5" y="0.5" width="12" height="12" rx="1.2" fill="none" stroke="#111" stroke-width="1.05"/><path d="M2.4 6.4 L4.6 8.5 L10 3.4" fill="none" stroke="#111" stroke-width="1.2"/></svg></div>
<div class="a" style="left:492px;top:462px;width:13px;height:13px"><svg class="ck" width="13" height="13" viewBox="0 0 13 13"><rect x="0.5" y="0.5" width="12" height="12" rx="1.2" fill="none" stroke="#111" stroke-width="1.05"/><path d="M2.4 6.4 L4.6 8.5 L10 3.4" fill="none" stroke="#111" stroke-width="1.2"/></svg></div>
<div class="a" style="left:559px;top:462px;width:13px;height:13px"><svg class="ck" width="13" height="13" viewBox="0 0 13 13"><rect x="0.5" y="0.5" width="12" height="12" rx="1.2" fill="none" stroke="#111" stroke-width="1.05"/><path d="M2.4 6.4 L4.6 8.5 L10 3.4" fill="none" stroke="#111" stroke-width="1.2"/></svg></div>
<div class="a" style="left:626px;top:462px;width:13px;height:13px"><svg class="ck" width="13" height="13" viewBox="0 0 13 13"><rect x="0.5" y="0.5" width="12" height="12" rx="1.2" fill="none" stroke="#111" stroke-width="1.05"/><path d="M2.4 6.4 L4.6 8.5 L10 3.4" fill="none" stroke="#111" stroke-width="1.2"/></svg></div>
<div class="a pt" style="left:797px;top:460px"><span style="display:inline-block;transform:scaleX(1.12);transform-origin:left">Standards ...</span></div>
<div class="a" style="left:36px;top:480px;width:330px;height:19px;background:#f4f4f4"></div>
<div class="a lt" style="left:116.6px;top:480px"><span style="display:inline-block;transform:scaleX(1.25);transform-origin:left">510400</span></div>
<div class="a lt" style="left:165.8px;top:480px">-</div>
<div class="a lt" style="left:173.3px;top:480px"><span style="display:inline-block;transform:scaleX(1.066);transform-origin:left">PE &amp; Sports grant</span></div>
<div class="a" style="left:367px;top:480px;width:30px;height:19px;background:#eee4b9"></div>
<div class="a" style="left:375px;top:482px;width:16px;height:16px"><svg width="16" height="16" viewBox="0 0 16 16"><g transform="translate(1.2 14.6) rotate(-45)" fill="#2e2e2e"><path d="M0 0 L4 -1.35 H14 V1.35 H4 Z"/><path d="M14.7 -1.35 H16.9 Q17.9 -1.35 17.9 -0.35 V0.35 Q17.9 1.35 16.9 1.35 H14.7 Z"/></g></svg></div>
<div class="a" style="left:398px;top:480px;width:66px;height:19px;background:#f1f5f3"></div>
<div class="a" style="left:465px;top:480px;width:66px;height:19px;background:#f1f5f3"></div>
<div class="a" style="left:532px;top:480px;width:66px;height:19px;background:#f1f5f3"></div>
<div class="a" style="left:599px;top:480px;width:66px;height:19px;background:#f1f5f3"></div>
<div class="a" style="left:666px;top:480px;width:194px;height:19px;background:#eee4b9"></div>
<div class="a" style="left:425px;top:482px;width:13px;height:13px"><svg class="ck" width="13" height="13" viewBox="0 0 13 13"><rect x="0.5" y="0.5" width="12" height="12" rx="1.2" fill="none" stroke="#111" stroke-width="1.05"/><path d="M2.4 6.4 L4.6 8.5 L10 3.4" fill="none" stroke="#111" stroke-width="1.2"/></svg></div>
<div class="a" style="left:492px;top:482px;width:13px;height:13px"><svg class="ck" width="13" height="13" viewBox="0 0 13 13"><rect x="0.5" y="0.5" width="12" height="12" rx="1.2" fill="none" stroke="#111" stroke-width="1.05"/><path d="M2.4 6.4 L4.6 8.5 L10 3.4" fill="none" stroke="#111" stroke-width="1.2"/></svg></div>
<div class="a" style="left:559px;top:482px;width:13px;height:13px"><svg class="ck" width="13" height="13" viewBox="0 0 13 13"><rect x="0.5" y="0.5" width="12" height="12" rx="1.2" fill="none" stroke="#111" stroke-width="1.05"/><path d="M2.4 6.4 L4.6 8.5 L10 3.4" fill="none" stroke="#111" stroke-width="1.2"/></svg></div>
<div class="a" style="left:626px;top:482px;width:13px;height:13px"><svg class="ck" width="13" height="13" viewBox="0 0 13 13"><rect x="0.5" y="0.5" width="12" height="12" rx="1.2" fill="none" stroke="#111" stroke-width="1.05"/><path d="M2.4 6.4 L4.6 8.5 L10 3.4" fill="none" stroke="#111" stroke-width="1.2"/></svg></div>
<div class="a pt" style="left:797px;top:480px"><span style="display:inline-block;transform:scaleX(1.12);transform-origin:left">Standards ...</span></div>
<div class="a" style="left:36px;top:500px;width:330px;height:19px;background:#f4f4f4"></div>
<div class="a lt" style="left:116.6px;top:500px"><span style="display:inline-block;transform:scaleX(1.25);transform-origin:left">510500</span></div>
<div class="a lt" style="left:165.8px;top:500px">-</div>
<div class="a lt" style="left:173.3px;top:500px"><span style="display:inline-block;transform:scaleX(1.066);transform-origin:left">Teachers Pay Grant</span></div>
<div class="a" style="left:367px;top:500px;width:30px;height:19px;background:#eee4b9"></div>
<div class="a" style="left:375px;top:502px;width:16px;height:16px"><svg width="16" height="16" viewBox="0 0 16 16"><g transform="translate(1.2 14.6) rotate(-45)" fill="#2e2e2e"><path d="M0 0 L4 -1.35 H14 V1.35 H4 Z"/><path d="M14.7 -1.35 H16.9 Q17.9 -1.35 17.9 -0.35 V0.35 Q17.9 1.35 16.9 1.35 H14.7 Z"/></g></svg></div>
<div class="a" style="left:398px;top:500px;width:66px;height:19px;background:#dbeedf"></div>
<div class="a" style="left:465px;top:500px;width:66px;height:19px;background:#dbeedf"></div>
<div class="a" style="left:532px;top:500px;width:66px;height:19px;background:#dbeedf"></div>
<div class="a" style="left:599px;top:500px;width:66px;height:19px;background:#dbeedf"></div>
<div class="a" style="left:666px;top:500px;width:194px;height:19px;background:#eee4b9"></div>
<div class="a" style="left:425px;top:502px;width:13px;height:13px"><svg class="ck" width="13" height="13" viewBox="0 0 13 13"><rect x="0.5" y="0.5" width="12" height="12" rx="1.2" fill="none" stroke="#111" stroke-width="1.05"/><path d="M2.4 6.4 L4.6 8.5 L10 3.4" fill="none" stroke="#111" stroke-width="1.2"/></svg></div>
<div class="a" style="left:492px;top:502px;width:13px;height:13px"><svg class="ck" width="13" height="13" viewBox="0 0 13 13"><rect x="0.5" y="0.5" width="12" height="12" rx="1.2" fill="none" stroke="#111" stroke-width="1.05"/><path d="M2.4 6.4 L4.6 8.5 L10 3.4" fill="none" stroke="#111" stroke-width="1.2"/></svg></div>
<div class="a" style="left:559px;top:502px;width:13px;height:13px"><svg class="ck" width="13" height="13" viewBox="0 0 13 13"><rect x="0.5" y="0.5" width="12" height="12" rx="1.2" fill="none" stroke="#111" stroke-width="1.05"/><path d="M2.4 6.4 L4.6 8.5 L10 3.4" fill="none" stroke="#111" stroke-width="1.2"/></svg></div>
<div class="a" style="left:626px;top:502px;width:13px;height:13px"><svg class="ck" width="13" height="13" viewBox="0 0 13 13"><rect x="0.5" y="0.5" width="12" height="12" rx="1.2" fill="none" stroke="#111" stroke-width="1.05"/><path d="M2.4 6.4 L4.6 8.5 L10 3.4" fill="none" stroke="#111" stroke-width="1.2"/></svg></div>
<div class="a pt" style="left:797px;top:500px"><span style="display:inline-block;transform:scaleX(1.12);transform-origin:left">Standards ...</span></div>
<div class="a" style="left:36px;top:520px;width:330px;height:19px;background:#f4f4f4"></div>
<div class="a lt" style="left:116.6px;top:520px"><span style="display:inline-block;transform:scaleX(1.25);transform-origin:left">510510</span></div>
<div class="a lt" style="left:165.8px;top:520px">-</div>
<div class="a lt" style="left:173.3px;top:520px"><span style="display:inline-block;transform:scaleX(1.062);transform-origin:left">Teachers Pension Employer Con...</span></div>
<div class="a" style="left:367px;top:520px;width:30px;height:19px;background:#eee4b9"></div>
<div class="a" style="left:375px;top:522px;width:16px;height:16px"><svg width="16" height="16" viewBox="0 0 16 16"><g transform="translate(1.2 14.6) rotate(-45)" fill="#2e2e2e"><path d="M0 0 L4 -1.35 H14 V1.35 H4 Z"/><path d="M14.7 -1.35 H16.9 Q17.9 -1.35 17.9 -0.35 V0.35 Q17.9 1.35 16.9 1.35 H14.7 Z"/></g></svg></div>
<div class="a" style="left:398px;top:520px;width:66px;height:19px;background:#f1f5f3"></div>
<div class="a" style="left:465px;top:520px;width:66px;height:19px;background:#f1f5f3"></div>
<div class="a" style="left:532px;top:520px;width:66px;height:19px;background:#f1f5f3"></div>
<div class="a" style="left:599px;top:520px;width:66px;height:19px;background:#f1f5f3"></div>
<div class="a" style="left:666px;top:520px;width:194px;height:19px;background:#eee4b9"></div>
<div class="a" style="left:425px;top:522px;width:13px;height:13px"><svg class="ck" width="13" height="13" viewBox="0 0 13 13"><rect x="0.5" y="0.5" width="12" height="12" rx="1.2" fill="none" stroke="#111" stroke-width="1.05"/><path d="M2.4 6.4 L4.6 8.5 L10 3.4" fill="none" stroke="#111" stroke-width="1.2"/></svg></div>
<div class="a" style="left:492px;top:522px;width:13px;height:13px"><svg class="ck" width="13" height="13" viewBox="0 0 13 13"><rect x="0.5" y="0.5" width="12" height="12" rx="1.2" fill="none" stroke="#111" stroke-width="1.05"/><path d="M2.4 6.4 L4.6 8.5 L10 3.4" fill="none" stroke="#111" stroke-width="1.2"/></svg></div>
<div class="a" style="left:559px;top:522px;width:13px;height:13px"><svg class="ck" width="13" height="13" viewBox="0 0 13 13"><rect x="0.5" y="0.5" width="12" height="12" rx="1.2" fill="none" stroke="#111" stroke-width="1.05"/><path d="M2.4 6.4 L4.6 8.5 L10 3.4" fill="none" stroke="#111" stroke-width="1.2"/></svg></div>
<div class="a" style="left:626px;top:522px;width:13px;height:13px"><svg class="ck" width="13" height="13" viewBox="0 0 13 13"><rect x="0.5" y="0.5" width="12" height="12" rx="1.2" fill="none" stroke="#111" stroke-width="1.05"/><path d="M2.4 6.4 L4.6 8.5 L10 3.4" fill="none" stroke="#111" stroke-width="1.2"/></svg></div>
<div class="a pt" style="left:797px;top:520px"><span style="display:inline-block;transform:scaleX(1.12);transform-origin:left">Standards ...</span></div>
<div class="a" style="left:36px;top:540px;width:330px;height:19px;background:#f4f4f4"></div>
<div class="a lt" style="left:116.6px;top:540px"><span style="display:inline-block;transform:scaleX(1.25);transform-origin:left">510950</span></div>
<div class="a lt" style="left:165.8px;top:540px">-</div>
<div class="a lt" style="left:173.3px;top:540px"><span style="display:inline-block;transform:scaleX(1.09);transform-origin:left">Other DfE revenue grants</span></div>
<div class="a" style="left:367px;top:540px;width:30px;height:19px;background:#eee4b9"></div>
<div class="a" style="left:375px;top:542px;width:16px;height:16px"><svg width="16" height="16" viewBox="0 0 16 16"><g transform="translate(1.2 14.6) rotate(-45)" fill="#2e2e2e"><path d="M0 0 L4 -1.35 H14 V1.35 H4 Z"/><path d="M14.7 -1.35 H16.9 Q17.9 -1.35 17.9 -0.35 V0.35 Q17.9 1.35 16.9 1.35 H14.7 Z"/></g></svg></div>
<div class="a" style="left:398px;top:540px;width:66px;height:19px;background:#dbeedf"></div>
<div class="a" style="left:465px;top:540px;width:66px;height:19px;background:#dbeedf"></div>
<div class="a" style="left:532px;top:540px;width:66px;height:19px;background:#dbeedf"></div>
<div class="a" style="left:599px;top:540px;width:66px;height:19px;background:#dbeedf"></div>
<div class="a" style="left:666px;top:540px;width:194px;height:19px;background:#eee4b9"></div>
<div class="a" style="left:425px;top:542px;width:13px;height:13px"><svg class="ck" width="13" height="13" viewBox="0 0 13 13"><rect x="0.5" y="0.5" width="12" height="12" rx="1.2" fill="none" stroke="#111" stroke-width="1.05"/><path d="M2.4 6.4 L4.6 8.5 L10 3.4" fill="none" stroke="#111" stroke-width="1.2"/></svg></div>
<div class="a" style="left:492px;top:542px;width:13px;height:13px"><svg class="ck" width="13" height="13" viewBox="0 0 13 13"><rect x="0.5" y="0.5" width="12" height="12" rx="1.2" fill="none" stroke="#111" stroke-width="1.05"/><path d="M2.4 6.4 L4.6 8.5 L10 3.4" fill="none" stroke="#111" stroke-width="1.2"/></svg></div>
<div class="a" style="left:559px;top:542px;width:13px;height:13px"><svg class="ck" width="13" height="13" viewBox="0 0 13 13"><rect x="0.5" y="0.5" width="12" height="12" rx="1.2" fill="none" stroke="#111" stroke-width="1.05"/><path d="M2.4 6.4 L4.6 8.5 L10 3.4" fill="none" stroke="#111" stroke-width="1.2"/></svg></div>
<div class="a" style="left:626px;top:542px;width:13px;height:13px"><svg class="ck" width="13" height="13" viewBox="0 0 13 13"><rect x="0.5" y="0.5" width="12" height="12" rx="1.2" fill="none" stroke="#111" stroke-width="1.05"/><path d="M2.4 6.4 L4.6 8.5 L10 3.4" fill="none" stroke="#111" stroke-width="1.2"/></svg></div>
<div class="a pt" style="left:797px;top:540px"><span style="display:inline-block;transform:scaleX(1.12);transform-origin:left">Standards ...</span></div>
<div class="a" style="left:36px;top:560px;width:330px;height:19px;background:#f4f4f4"></div>
<div class="a lt" style="left:116.6px;top:560px"><span style="display:inline-block;transform:scaleX(1.25);transform-origin:left">510990</span></div>
<div class="a lt" style="left:165.8px;top:560px">-</div>
<div class="a lt" style="left:173.3px;top:560px"><span style="display:inline-block;transform:scaleX(1.1);transform-origin:left">Temporary DfE revenue grant - ...</span></div>
<div class="a" style="left:367px;top:560px;width:30px;height:19px;background:#eee4b9"></div>
<div class="a" style="left:375px;top:562px;width:16px;height:16px"><svg width="16" height="16" viewBox="0 0 16 16"><g transform="translate(1.2 14.6) rotate(-45)" fill="#2e2e2e"><path d="M0 0 L4 -1.35 H14 V1.35 H4 Z"/><path d="M14.7 -1.35 H16.9 Q17.9 -1.35 17.9 -0.35 V0.35 Q17.9 1.35 16.9 1.35 H14.7 Z"/></g></svg></div>
<div class="a" style="left:398px;top:560px;width:66px;height:19px;background:#f1f5f3"></div>
<div class="a" style="left:465px;top:560px;width:66px;height:19px;background:#f1f5f3"></div>
<div class="a" style="left:532px;top:560px;width:66px;height:19px;background:#f1f5f3"></div>
<div class="a" style="left:599px;top:560px;width:66px;height:19px;background:#f1f5f3"></div>
<div class="a" style="left:666px;top:560px;width:194px;height:19px;background:#eee4b9"></div>
<div class="a" style="left:425px;top:562px;width:13px;height:13px"><svg class="ck" width="13" height="13" viewBox="0 0 13 13"><rect x="0.5" y="0.5" width="12" height="12" rx="1.2" fill="none" stroke="#111" stroke-width="1.05"/><path d="M2.4 6.4 L4.6 8.5 L10 3.4" fill="none" stroke="#111" stroke-width="1.2"/></svg></div>
<div class="a" style="left:492px;top:562px;width:13px;height:13px"><svg class="ck" width="13" height="13" viewBox="0 0 13 13"><rect x="0.5" y="0.5" width="12" height="12" rx="1.2" fill="none" stroke="#111" stroke-width="1.05"/><path d="M2.4 6.4 L4.6 8.5 L10 3.4" fill="none" stroke="#111" stroke-width="1.2"/></svg></div>
<div class="a" style="left:559px;top:562px;width:13px;height:13px"><svg class="ck" width="13" height="13" viewBox="0 0 13 13"><rect x="0.5" y="0.5" width="12" height="12" rx="1.2" fill="none" stroke="#111" stroke-width="1.05"/><path d="M2.4 6.4 L4.6 8.5 L10 3.4" fill="none" stroke="#111" stroke-width="1.2"/></svg></div>
<div class="a" style="left:626px;top:562px;width:13px;height:13px"><svg class="ck" width="13" height="13" viewBox="0 0 13 13"><rect x="0.5" y="0.5" width="12" height="12" rx="1.2" fill="none" stroke="#111" stroke-width="1.05"/><path d="M2.4 6.4 L4.6 8.5 L10 3.4" fill="none" stroke="#111" stroke-width="1.2"/></svg></div>
<div class="a pt" style="left:797px;top:560px"><span style="display:inline-block;transform:scaleX(1.12);transform-origin:left">Standards ...</span></div>
<div class="a" style="left:36px;top:580px;width:330px;height:19px;background:#f4f4f4"></div>
<div class="a lt" style="left:116.6px;top:580px"><span style="display:inline-block;transform:scaleX(1.25);transform-origin:left">515100</span></div>
<div class="a lt" style="left:165.8px;top:580px">-</div>
<div class="a lt" style="left:173.3px;top:580px"><span style="display:inline-block;transform:scaleX(1.05);transform-origin:left">DfE Group Grants: Standards &amp; T...</span></div>
<div class="a" style="left:367px;top:580px;width:30px;height:19px;background:#eee4b9"></div>
<div class="a" style="left:375px;top:582px;width:16px;height:16px"><svg width="16" height="16" viewBox="0 0 16 16"><g transform="translate(1.2 14.6) rotate(-45)" fill="#2e2e2e"><path d="M0 0 L4 -1.35 H14 V1.35 H4 Z"/><path d="M14.7 -1.35 H16.9 Q17.9 -1.35 17.9 -0.35 V0.35 Q17.9 1.35 16.9 1.35 H14.7 Z"/></g></svg></div>
<div class="a" style="left:398px;top:580px;width:66px;height:19px;background:#dbeedf"></div>
<div class="a" style="left:465px;top:580px;width:66px;height:19px;background:#dbeedf"></div>
<div class="a" style="left:532px;top:580px;width:66px;height:19px;background:#dbeedf"></div>
<div class="a" style="left:599px;top:580px;width:66px;height:19px;background:#dbeedf"></div>
<div class="a" style="left:666px;top:580px;width:194px;height:19px;background:#eee4b9"></div>
<div class="a" style="left:425px;top:582px;width:13px;height:13px"><svg class="ck" width="13" height="13" viewBox="0 0 13 13"><rect x="0.5" y="0.5" width="12" height="12" rx="1.2" fill="none" stroke="#111" stroke-width="1.05"/><path d="M2.4 6.4 L4.6 8.5 L10 3.4" fill="none" stroke="#111" stroke-width="1.2"/></svg></div>
<div class="a" style="left:492px;top:582px;width:13px;height:13px"><svg class="ck" width="13" height="13" viewBox="0 0 13 13"><rect x="0.5" y="0.5" width="12" height="12" rx="1.2" fill="none" stroke="#111" stroke-width="1.05"/><path d="M2.4 6.4 L4.6 8.5 L10 3.4" fill="none" stroke="#111" stroke-width="1.2"/></svg></div>
<div class="a" style="left:559px;top:582px;width:13px;height:13px"><svg class="ck" width="13" height="13" viewBox="0 0 13 13"><rect x="0.5" y="0.5" width="12" height="12" rx="1.2" fill="none" stroke="#111" stroke-width="1.05"/><path d="M2.4 6.4 L4.6 8.5 L10 3.4" fill="none" stroke="#111" stroke-width="1.2"/></svg></div>
<div class="a" style="left:626px;top:582px;width:13px;height:13px"><svg class="ck" width="13" height="13" viewBox="0 0 13 13"><rect x="0.5" y="0.5" width="12" height="12" rx="1.2" fill="none" stroke="#111" stroke-width="1.05"/><path d="M2.4 6.4 L4.6 8.5 L10 3.4" fill="none" stroke="#111" stroke-width="1.2"/></svg></div>
<div class="a pt" style="left:797px;top:580px"><span style="display:inline-block;transform:scaleX(1.12);transform-origin:left">Standards ...</span></div>
<div class="a" style="left:36px;top:600px;width:330px;height:19px;background:#f4f4f4"></div>
<div class="a lt" style="left:116.6px;top:600px"><span style="display:inline-block;transform:scaleX(1.25);transform-origin:left">510970</span></div>
<div class="a lt" style="left:165.8px;top:600px">-</div>
<div class="a lt" style="left:173.3px;top:600px"><span style="display:inline-block;transform:scaleX(1.09);transform-origin:left">NI Grant</span></div>
<div class="a" style="left:367px;top:600px;width:30px;height:19px;background:#f4f4f4"></div>
<div class="a" style="left:375px;top:602px;width:16px;height:16px"><svg width="16" height="16" viewBox="0 0 16 16"><g transform="translate(1.2 14.6) rotate(-45)" fill="#2e2e2e"><path d="M0 0 L4 -1.35 H14 V1.35 H4 Z"/><path d="M14.7 -1.35 H16.9 Q17.9 -1.35 17.9 -0.35 V0.35 Q17.9 1.35 16.9 1.35 H14.7 Z"/></g></svg></div>
<div class="a" style="left:398px;top:600px;width:66px;height:19px;background:#f1f5f3"></div>
<div class="a" style="left:465px;top:600px;width:66px;height:19px;background:#f1f5f3"></div>
<div class="a" style="left:532px;top:600px;width:66px;height:19px;background:#f1f5f3"></div>
<div class="a" style="left:599px;top:600px;width:66px;height:19px;background:#f1f5f3"></div>
<div class="a" style="left:666px;top:600px;width:194px;height:19px;background:#f1f5f3"></div>
<div class="a" style="left:425px;top:602px;width:13px;height:13px"><svg class="ck" width="13" height="13" viewBox="0 0 13 13"><rect x="0.5" y="0.5" width="12" height="12" rx="1.2" fill="none" stroke="#111" stroke-width="1.05"/><path d="M2.4 6.4 L4.6 8.5 L10 3.4" fill="none" stroke="#111" stroke-width="1.2"/></svg></div>
<div class="a" style="left:492px;top:602px;width:13px;height:13px"><svg class="ck" width="13" height="13" viewBox="0 0 13 13"><rect x="0.5" y="0.5" width="12" height="12" rx="1.2" fill="none" stroke="#111" stroke-width="1.05"/><path d="M2.4 6.4 L4.6 8.5 L10 3.4" fill="none" stroke="#111" stroke-width="1.2"/></svg></div>
<div class="a" style="left:559px;top:602px;width:13px;height:13px"><svg class="ck" width="13" height="13" viewBox="0 0 13 13"><rect x="0.5" y="0.5" width="12" height="12" rx="1.2" fill="none" stroke="#111" stroke-width="1.05"/><path d="M2.4 6.4 L4.6 8.5 L10 3.4" fill="none" stroke="#111" stroke-width="1.2"/></svg></div>
<div class="a" style="left:626px;top:602px;width:13px;height:13px"><svg class="ck" width="13" height="13" viewBox="0 0 13 13"><rect x="0.5" y="0.5" width="12" height="12" rx="1.2" fill="none" stroke="#111" stroke-width="1.05"/><path d="M2.4 6.4 L4.6 8.5 L10 3.4" fill="none" stroke="#111" stroke-width="1.2"/></svg></div>
<div class="a pt" style="left:797px;top:600px"><span style="display:inline-block;transform:scaleX(1.12);transform-origin:left">Standards ...</span></div>
<div class="a" style="left:36px;top:620px;width:330px;height:19px;background:#f4f4f4"></div>
<div class="a lt" style="left:116.6px;top:620px"><span style="display:inline-block;transform:scaleX(1.25);transform-origin:left">510980</span></div>
<div class="a lt" style="left:165.8px;top:620px">-</div>
<div class="a lt" style="left:173.3px;top:620px"><span style="display:inline-block;transform:scaleX(1.084);transform-origin:left">School Budget Support Grant</span></div>
<div class="a" style="left:367px;top:620px;width:30px;height:19px;background:#f4f4f4"></div>
<div class="a" style="left:375px;top:622px;width:16px;height:16px"><svg width="16" height="16" viewBox="0 0 16 16"><g transform="translate(1.2 14.6) rotate(-45)" fill="#2e2e2e"><path d="M0 0 L4 -1.35 H14 V1.35 H4 Z"/><path d="M14.7 -1.35 H16.9 Q17.9 -1.35 17.9 -0.35 V0.35 Q17.9 1.35 16.9 1.35 H14.7 Z"/></g></svg></div>
<div class="a" style="left:398px;top:620px;width:66px;height:19px;background:#dbeedf"></div>
<div class="a" style="left:465px;top:620px;width:66px;height:19px;background:#dbeedf"></div>
<div class="a" style="left:532px;top:620px;width:66px;height:19px;background:#dbeedf"></div>
<div class="a" style="left:599px;top:620px;width:66px;height:19px;background:#dbeedf"></div>
<div class="a" style="left:666px;top:620px;width:194px;height:19px;background:#dbeedf"></div>
<div class="a" style="left:425px;top:622px;width:13px;height:13px"><svg class="ck" width="13" height="13" viewBox="0 0 13 13"><rect x="0.5" y="0.5" width="12" height="12" rx="1.2" fill="none" stroke="#111" stroke-width="1.05"/><path d="M2.4 6.4 L4.6 8.5 L10 3.4" fill="none" stroke="#111" stroke-width="1.2"/></svg></div>
<div class="a" style="left:492px;top:622px;width:13px;height:13px"><svg class="ck" width="13" height="13" viewBox="0 0 13 13"><rect x="0.5" y="0.5" width="12" height="12" rx="1.2" fill="none" stroke="#111" stroke-width="1.05"/><path d="M2.4 6.4 L4.6 8.5 L10 3.4" fill="none" stroke="#111" stroke-width="1.2"/></svg></div>
<div class="a" style="left:559px;top:622px;width:13px;height:13px"><svg class="ck" width="13" height="13" viewBox="0 0 13 13"><rect x="0.5" y="0.5" width="12" height="12" rx="1.2" fill="none" stroke="#111" stroke-width="1.05"/><path d="M2.4 6.4 L4.6 8.5 L10 3.4" fill="none" stroke="#111" stroke-width="1.2"/></svg></div>
<div class="a" style="left:626px;top:622px;width:13px;height:13px"><svg class="ck" width="13" height="13" viewBox="0 0 13 13"><rect x="0.5" y="0.5" width="12" height="12" rx="1.2" fill="none" stroke="#111" stroke-width="1.05"/><path d="M2.4 6.4 L4.6 8.5 L10 3.4" fill="none" stroke="#111" stroke-width="1.2"/></svg></div>
<div class="a pt" style="left:797px;top:620px"><span style="display:inline-block;transform:scaleX(1.12);transform-origin:left">Standards ...</span></div>
<div class="a" style="left:36px;top:640px;width:330px;height:19px;background:#f4f4f4"></div>
<div class="a tri" style="left:81.5px;top:647px"></div>
<div class="a lt" style="left:94px;top:640px"><span style="display:inline-block;transform:scaleX(1.08);transform-origin:left">Other Government Grants</span></div>
<div class="a" style="left:367px;top:640px;width:30px;height:19px;background:#f4f4f4"></div>
<div class="a" style="left:375px;top:642px;width:16px;height:16px"><svg width="16" height="16" viewBox="0 0 16 16"><g transform="translate(1.2 14.6) rotate(-45)" fill="#2e2e2e"><path d="M0 0 L4 -1.35 H14 V1.35 H4 Z"/><path d="M14.7 -1.35 H16.9 Q17.9 -1.35 17.9 -0.35 V0.35 Q17.9 1.35 16.9 1.35 H14.7 Z"/></g></svg></div>
<div class="a" style="left:398px;top:640px;width:66px;height:19px;background:#f1f5f3"></div>
<div class="a" style="left:465px;top:640px;width:66px;height:19px;background:#f1f5f3"></div>
<div class="a" style="left:532px;top:640px;width:66px;height:19px;background:#f1f5f3"></div>
<div class="a" style="left:599px;top:640px;width:66px;height:19px;background:#f1f5f3"></div>
<div class="a" style="left:666px;top:640px;width:194px;height:19px;background:#f1f5f3"></div>
<div class="a" style="left:425px;top:642px;width:13px;height:13px"><svg class="ck" width="13" height="13" viewBox="0 0 13 13"><rect x="0.5" y="0.5" width="12" height="12" rx="1.2" fill="none" stroke="#111" stroke-width="1.05"/><path d="M2.4 6.4 L4.6 8.5 L10 3.4" fill="none" stroke="#111" stroke-width="1.2"/></svg></div>
<div class="a" style="left:492px;top:642px;width:13px;height:13px"><svg class="ck" width="13" height="13" viewBox="0 0 13 13"><rect x="0.5" y="0.5" width="12" height="12" rx="1.2" fill="none" stroke="#111" stroke-width="1.05"/><path d="M2.4 6.4 L4.6 8.5 L10 3.4" fill="none" stroke="#111" stroke-width="1.2"/></svg></div>
<div class="a" style="left:559px;top:642px;width:13px;height:13px"><svg class="ck" width="13" height="13" viewBox="0 0 13 13"><rect x="0.5" y="0.5" width="12" height="12" rx="1.2" fill="none" stroke="#111" stroke-width="1.05"/><path d="M2.4 6.4 L4.6 8.5 L10 3.4" fill="none" stroke="#111" stroke-width="1.2"/></svg></div>
<div class="a" style="left:626px;top:642px;width:13px;height:13px"><svg class="ck" width="13" height="13" viewBox="0 0 13 13"><rect x="0.5" y="0.5" width="12" height="12" rx="1.2" fill="none" stroke="#111" stroke-width="1.05"/><path d="M2.4 6.4 L4.6 8.5 L10 3.4" fill="none" stroke="#111" stroke-width="1.2"/></svg></div>
<div class="a" style="left:36px;top:660px;width:330px;height:19px;background:#f4f4f4"></div>
<div class="a tri" style="left:101.5px;top:667px"></div>
<div class="a lt" style="left:113.4px;top:660px"><span style="display:inline-block;transform:scaleX(1.14);transform-origin:left">A2</span></div>
<div class="a lt" style="left:132.6px;top:660px">-</div>
<div class="a lt" style="left:140.2px;top:660px"><span style="display:inline-block;transform:scaleX(1.075);transform-origin:left">Other Govt Grants</span></div>
<div class="a" style="left:367px;top:660px;width:30px;height:19px;background:#f4f4f4"></div>
<div class="a" style="left:375px;top:662px;width:16px;height:16px"><svg width="16" height="16" viewBox="0 0 16 16"><g transform="translate(1.2 14.6) rotate(-45)" fill="#2e2e2e"><path d="M0 0 L4 -1.35 H14 V1.35 H4 Z"/><path d="M14.7 -1.35 H16.9 Q17.9 -1.35 17.9 -0.35 V0.35 Q17.9 1.35 16.9 1.35 H14.7 Z"/></g></svg></div>
<div class="a" style="left:398px;top:660px;width:66px;height:19px;background:#dbeedf"></div>
<div class="a" style="left:465px;top:660px;width:66px;height:19px;background:#dbeedf"></div>
<div class="a" style="left:532px;top:660px;width:66px;height:19px;background:#dbeedf"></div>
<div class="a" style="left:599px;top:660px;width:66px;height:19px;background:#dbeedf"></div>
<div class="a" style="left:666px;top:660px;width:194px;height:19px;background:#dbeedf"></div>
<div class="a" style="left:425px;top:662px;width:13px;height:13px"><svg class="ck" width="13" height="13" viewBox="0 0 13 13"><rect x="0.5" y="0.5" width="12" height="12" rx="1.2" fill="none" stroke="#111" stroke-width="1.05"/><path d="M2.4 6.4 L4.6 8.5 L10 3.4" fill="none" stroke="#111" stroke-width="1.2"/></svg></div>
<div class="a" style="left:492px;top:662px;width:13px;height:13px"><svg class="ck" width="13" height="13" viewBox="0 0 13 13"><rect x="0.5" y="0.5" width="12" height="12" rx="1.2" fill="none" stroke="#111" stroke-width="1.05"/><path d="M2.4 6.4 L4.6 8.5 L10 3.4" fill="none" stroke="#111" stroke-width="1.2"/></svg></div>
<div class="a" style="left:559px;top:662px;width:13px;height:13px"><svg class="ck" width="13" height="13" viewBox="0 0 13 13"><rect x="0.5" y="0.5" width="12" height="12" rx="1.2" fill="none" stroke="#111" stroke-width="1.05"/><path d="M2.4 6.4 L4.6 8.5 L10 3.4" fill="none" stroke="#111" stroke-width="1.2"/></svg></div>
<div class="a" style="left:626px;top:662px;width:13px;height:13px"><svg class="ck" width="13" height="13" viewBox="0 0 13 13"><rect x="0.5" y="0.5" width="12" height="12" rx="1.2" fill="none" stroke="#111" stroke-width="1.05"/><path d="M2.4 6.4 L4.6 8.5 L10 3.4" fill="none" stroke="#111" stroke-width="1.2"/></svg></div>
<div class="a pt" style="left:668px;top:660px"><span style="display:inline-block;transform:scaleX(1.13);transform-origin:left">Other Government Grants</span></div>
<div class="a" style="left:36px;top:680px;width:330px;height:19px;background:#f4f4f4"></div>
<div class="a lt" style="left:116.6px;top:680px"><span style="display:inline-block;transform:scaleX(1.25);transform-origin:left">520100</span></div>
<div class="a lt" style="left:165.8px;top:680px">-</div>
<div class="a lt" style="left:173.3px;top:680px"><span style="display:inline-block;transform:scaleX(1.05);transform-origin:left">LA - SEN</span></div>
<div class="a" style="left:367px;top:680px;width:30px;height:19px;background:#eee4b9"></div>
<div class="a" style="left:375px;top:682px;width:16px;height:16px"><svg width="16" height="16" viewBox="0 0 16 16"><g transform="translate(1.2 14.6) rotate(-45)" fill="#2e2e2e"><path d="M0 0 L4 -1.35 H14 V1.35 H4 Z"/><path d="M14.7 -1.35 H16.9 Q17.9 -1.35 17.9 -0.35 V0.35 Q17.9 1.35 16.9 1.35 H14.7 Z"/></g></svg></div>
<div class="a" style="left:398px;top:680px;width:66px;height:19px;background:#f1f5f3"></div>
<div class="a" style="left:465px;top:680px;width:66px;height:19px;background:#f1f5f3"></div>
<div class="a" style="left:532px;top:680px;width:66px;height:19px;background:#f1f5f3"></div>
<div class="a" style="left:599px;top:680px;width:66px;height:19px;background:#f1f5f3"></div>
<div class="a" style="left:666px;top:680px;width:194px;height:19px;background:#eee4b9"></div>
<div class="a" style="left:425px;top:682px;width:13px;height:13px"><svg class="ck" width="13" height="13" viewBox="0 0 13 13"><rect x="0.5" y="0.5" width="12" height="12" rx="1.2" fill="none" stroke="#111" stroke-width="1.05"/><path d="M2.4 6.4 L4.6 8.5 L10 3.4" fill="none" stroke="#111" stroke-width="1.2"/></svg></div>
<div class="a" style="left:492px;top:682px;width:13px;height:13px"><svg class="ck" width="13" height="13" viewBox="0 0 13 13"><rect x="0.5" y="0.5" width="12" height="12" rx="1.2" fill="none" stroke="#111" stroke-width="1.05"/><path d="M2.4 6.4 L4.6 8.5 L10 3.4" fill="none" stroke="#111" stroke-width="1.2"/></svg></div>
<div class="a" style="left:559px;top:682px;width:13px;height:13px"><svg class="ck" width="13" height="13" viewBox="0 0 13 13"><rect x="0.5" y="0.5" width="12" height="12" rx="1.2" fill="none" stroke="#111" stroke-width="1.05"/><path d="M2.4 6.4 L4.6 8.5 L10 3.4" fill="none" stroke="#111" stroke-width="1.2"/></svg></div>
<div class="a" style="left:599px;top:680px;width:66px;height:19px;background:#f4f4f4"></div>
<div class="a" style="left:626px;top:682px;width:13px;height:13px"><svg class="ck" width="13" height="13" viewBox="0 0 13 13"><rect x="0.5" y="0.5" width="12" height="12" rx="1.2" fill="none" stroke="#111" stroke-width="1.05"/></svg></div>
<div class="a pt" style="left:668px;top:680px"><span style="display:inline-block;transform:scaleX(1.11);transform-origin:left">A2 - Other Govt Grants</span></div>
<div class="a" style="left:36px;top:700px;width:330px;height:19px;background:#f4f4f4"></div>
<div class="a lt" style="left:116.6px;top:700px"><span style="display:inline-block;transform:scaleX(1.25);transform-origin:left">520150</span></div>
<div class="a lt" style="left:165.8px;top:700px">-</div>
<div class="a lt" style="left:173.3px;top:700px"><span style="display:inline-block;transform:scaleX(1.05);transform-origin:left">LA - Early Years</span></div>
<div class="a" style="left:367px;top:700px;width:30px;height:19px;background:#eee4b9"></div>
<div class="a" style="left:375px;top:702px;width:16px;height:16px"><svg width="16" height="16" viewBox="0 0 16 16"><g transform="translate(1.2 14.6) rotate(-45)" fill="#2e2e2e"><path d="M0 0 L4 -1.35 H14 V1.35 H4 Z"/><path d="M14.7 -1.35 H16.9 Q17.9 -1.35 17.9 -0.35 V0.35 Q17.9 1.35 16.9 1.35 H14.7 Z"/></g></svg></div>
<div class="a" style="left:398px;top:700px;width:66px;height:19px;background:#dbeedf"></div>
<div class="a" style="left:465px;top:700px;width:66px;height:19px;background:#dbeedf"></div>
<div class="a" style="left:532px;top:700px;width:66px;height:19px;background:#dbeedf"></div>
<div class="a" style="left:599px;top:700px;width:66px;height:19px;background:#dbeedf"></div>
<div class="a" style="left:666px;top:700px;width:194px;height:19px;background:#eee4b9"></div>
<div class="a" style="left:425px;top:702px;width:13px;height:13px"><svg class="ck" width="13" height="13" viewBox="0 0 13 13"><rect x="0.5" y="0.5" width="12" height="12" rx="1.2" fill="none" stroke="#111" stroke-width="1.05"/><path d="M2.4 6.4 L4.6 8.5 L10 3.4" fill="none" stroke="#111" stroke-width="1.2"/></svg></div>
<div class="a" style="left:492px;top:702px;width:13px;height:13px"><svg class="ck" width="13" height="13" viewBox="0 0 13 13"><rect x="0.5" y="0.5" width="12" height="12" rx="1.2" fill="none" stroke="#111" stroke-width="1.05"/><path d="M2.4 6.4 L4.6 8.5 L10 3.4" fill="none" stroke="#111" stroke-width="1.2"/></svg></div>
<div class="a" style="left:559px;top:702px;width:13px;height:13px"><svg class="ck" width="13" height="13" viewBox="0 0 13 13"><rect x="0.5" y="0.5" width="12" height="12" rx="1.2" fill="none" stroke="#111" stroke-width="1.05"/><path d="M2.4 6.4 L4.6 8.5 L10 3.4" fill="none" stroke="#111" stroke-width="1.2"/></svg></div>
<div class="a" style="left:599px;top:700px;width:66px;height:19px;background:#f4f4f4"></div>
<div class="a" style="left:626px;top:702px;width:13px;height:13px"><svg class="ck" width="13" height="13" viewBox="0 0 13 13"><rect x="0.5" y="0.5" width="12" height="12" rx="1.2" fill="none" stroke="#111" stroke-width="1.05"/></svg></div>
<div class="a pt" style="left:668px;top:700px"><span style="display:inline-block;transform:scaleX(1.11);transform-origin:left">A2 - Other Govt Grants</span></div>
<div class="a" id="circ"></div>
<svg class="a" style="left:0;top:411px" width="14" height="18" viewBox="0 0 14 18"><path d="M12.6 8.6 H-1 M4.2 2.2 L-2 8.6 L4.2 15" fill="none" stroke="#3d5250" stroke-width="2.3"/></svg>
<div class="a btn" style="left:33px;top:736px;width:196px;height:25px;line-height:25px;background:#5c7873;color:#fff"><span style="display:inline-block;transform:scaleX(1.17);transform-origin:center">Add ledger</span></div>
<div class="a" id="overlay"></div>
<div class="a" style="left:22px;top:729px;width:212px;height:43px;border:3px solid #ff4646;box-shadow:inset 2px 2px 4px rgba(0,0,0,0.25),0 2px 4px rgba(0,0,0,0.35)"></div>
<div class="a" style="left:467px;top:157px;width:340px;height:511px;background:#fff;box-shadow:0 0 0 1px rgba(0,0,0,0.17),0 0 2px 1px rgba(0,0,0,0.12)"></div>
<div class="a" style="left:467px;top:157px;width:340px;height:32px;background:#435c58"></div>
<div class="a mtitle" style="left:492px;top:209px"><span style="display:inline-block;transform:scaleX(1.13);transform-origin:left">New ledger</span></div>
<div class="a ml" style="left:495px;top:255px;width:130px;background:#f4f4f4"><span style="display:inline-block;transform:scaleX(1.09);transform-origin:left">Code*</span></div>
<div class="a" style="left:626px;top:255px;width:152px;height:19px;background:#e9f1ed"></div>
<div class="a ml" style="left:495px;top:275px;width:130px;background:#efefef"><span style="display:inline-block;transform:scaleX(1.09);transform-origin:left">Description</span></div>
<div class="a" style="left:626px;top:275px;width:152px;height:19px;background:#d5e3d8"></div>
<div class="a ml" style="left:495px;top:295px;width:130px;background:#f4f4f4"><span style="display:inline-block;transform:scaleX(1.09);transform-origin:left">Input</span></div>
<div class="a" style="left:626px;top:295px;width:152px;height:19px;background:#e9f1ed"></div>
<div class="a" style="left:696px;top:297px;width:13px;height:13px"><svg class="ck" width="13" height="13" viewBox="0 0 13 13"><rect x="0.5" y="0.5" width="12" height="12" rx="1.2" fill="none" stroke="#111" stroke-width="1.05"/><path d="M2.4 6.4 L4.6 8.5 L10 3.4" fill="none" stroke="#111" stroke-width="1.2"/></svg></div>
<div class="a ml" style="left:495px;top:315px;width:130px;background:#efefef"><span style="display:inline-block;transform:scaleX(1.09);transform-origin:left">Parent*</span></div>
<div class="a" style="left:626px;top:315px;width:152px;height:19px;background:#d5e3d8"></div>
<div class="a ml" style="left:495px;top:335px;width:130px;background:#f4f4f4"><span style="display:inline-block;transform:scaleX(1.09);transform-origin:left">Module*</span></div>
<div class="a" style="left:626px;top:335px;width:152px;height:19px;background:#e9f1ed"></div>
<div class="a ml" style="left:495px;top:355px;width:130px;background:#efefef"><span style="display:inline-block;transform:scaleX(1.09);transform-origin:left">Negative</span></div>
<div class="a" style="left:626px;top:355px;width:152px;height:19px;background:#d5e3d8"></div>
<div class="a" style="left:696px;top:357px;width:13px;height:13px"><svg class="ck" width="13" height="13" viewBox="0 0 13 13"><rect x="0.5" y="0.5" width="12" height="12" rx="1.2" fill="none" stroke="#111" stroke-width="1.05"/></svg></div>
<div class="a ml" style="left:495px;top:375px;width:130px;background:#f4f4f4"><span style="display:inline-block;transform:scaleX(1.09);transform-origin:left">Mapping</span></div>
<div class="a" style="left:696px;top:377px;width:13px;height:13px"><svg class="ck" width="13" height="13" viewBox="0 0 13 13"><rect x="0.5" y="0.5" width="12" height="12" rx="1.2" fill="none" stroke="#111" stroke-width="1.05"/></svg></div>
<div class="a ml" style="left:495px;top:395px;width:130px;background:#efefef"><span style="display:inline-block;transform:scaleX(1.09);transform-origin:left">Title mapping</span></div>
<div class="a ml" style="left:495px;top:415px;width:130px;background:#f4f4f4"><span style="display:inline-block;transform:scaleX(1.09);transform-origin:left">Cost centres</span></div>
<div class="a btn" style="left:492px;top:472px;width:96px;background:#5a7a73"><span style="display:inline-block;transform:scaleX(1.18);transform-origin:center">Add</span></div>
<div class="a btn" style="left:608px;top:472px;width:96px;background:#a3b5b0"><span style="display:inline-block;transform:scaleX(1.1);transform-origin:center">Cancel</span></div>
</body></html>
